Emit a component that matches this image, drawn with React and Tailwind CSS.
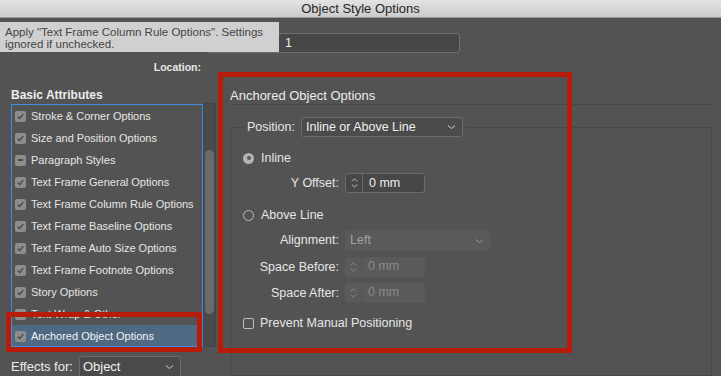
import React from 'react';

// Object Style Options dialog (InDesign) with red annotation boxes

const listItems = [
  { label: 'Stroke & Corner Options', state: 'on' },
  { label: 'Size and Position Options', state: 'on' },
  { label: 'Paragraph Styles', state: 'mixed' },
  { label: 'Text Frame General Options', state: 'on' },
  { label: 'Text Frame Column Rule Options', state: 'on' },
  { label: 'Text Frame Baseline Options', state: 'on' },
  { label: 'Text Frame Auto Size Options', state: 'on' },
  { label: 'Text Frame Footnote Options', state: 'on' },
  { label: 'Story Options', state: 'on' },
  { label: 'Text Wrap & Other', state: 'on' },
  { label: 'Anchored Object Options', state: 'on', selected: true },
];

const Chevron = ({ className = '' }) => (
  <svg className={className} width="9" height="6" viewBox="0 0 9 6" fill="none">
    <path d="M1 1.5l3.5 3 3.5-3" stroke="currentColor" strokeWidth="1" />
  </svg>
);

const ListCheck = ({ state }) => (
  <span className="w-[11px] h-[11px] rounded-[2px] bg-[#8d8d8d] flex items-center justify-center shrink-0">
    {state === 'mixed' ? (
      <span className="w-[5px] h-[2px] bg-[#4a4a4a]" />
    ) : (
      <svg width="9" height="9" viewBox="0 0 9 9" fill="none">
        <path d="M1.8 4.6l1.9 1.9 3.6-4.4" stroke="#4c4c4c" strokeWidth="1.5" />
      </svg>
    )}
  </span>
);

const Spinner = ({ value, disabled }) => (
  <div
    className={`flex w-[80px] h-[20px] rounded-[3px] ${
      disabled ? 'bg-[#5a5a5a] text-[#8a8a8a]' : 'bg-[#474747] border border-[#6c6c6c] text-[#ececec]'
    }`}
  >
    <div
      className={`w-[17px] flex flex-col items-center justify-center gap-[2px] border-r ${
        disabled ? 'border-[#535353] text-[#8a8a8a]' : 'border-[#6c6c6c] text-[#bdbdbd]'
      }`}
    >
      <svg width="7" height="4" viewBox="0 0 7 4" fill="none">
        <path d="M0.8 3.5l2.7-2.7 2.7 2.7" stroke="currentColor" strokeWidth="1" />
      </svg>
      <svg width="7" height="4" viewBox="0 0 7 4" fill="none">
        <path d="M0.8 0.5l2.7 2.7 2.7-2.7" stroke="currentColor" strokeWidth="1" />
      </svg>
    </div>
    <span className="pl-[6px] text-[12.5px] leading-[18px]">{value}</span>
  </div>
);

const FieldRow = ({ label, children, className = '' }) => (
  <div className={`flex items-center ${className}`}>
    <span className="w-[102px] text-right pr-[6px] text-[12.5px] text-[#e6e6e6]">{label}</span>
    {children}
  </div>
);

export default function App() {
  return (
    <div
      className="relative w-[721px] h-[376px] overflow-hidden bg-[#535353] text-[#e6e6e6] flex flex-col"
      style={{ fontFamily: '"Liberation Sans", Arial, sans-serif' }}
    >
      {/* Title bar */}
      <div className="h-[18px] shrink-0 bg-gradient-to-b from-[#e3e3e3] to-[#cbcbcb] border-b border-[#9c9c9c] flex items-center justify-center">
        <span className="text-[13px] text-[#262626] leading-none">Object Style Options</span>
      </div>

      {/* Style name field (left part hidden by tooltip) */}
      <div className="mt-[15px] flex items-center h-[20px]">
        <div className="w-[207px]" />
        <div className="w-[253px] h-[20px] bg-[#474747] border border-[#6f6f6f] rounded-[3px] pl-[77px] text-[12.5px] leading-[18px] text-[#f0f0f0]">
          1
        </div>
      </div>

      {/* Location */}
      <div className="mt-[7px] h-[16px] flex items-center">
        <span className="w-[201px] text-right text-[10.5px] font-bold text-[#e8e8e8]">Location:</span>
      </div>

      <div className="mt-[10px] flex flex-1 min-h-0">
        {/* Left column */}
        <div className="w-[216px] shrink-0 pl-[11px] flex flex-col">
          <div className="h-[18px] leading-[18px] text-[12px] font-bold text-[#ececec]">Basic Attributes</div>
          <div className="flex">
            <div className="w-[192px] h-[243px] border border-[#3d8ee0] overflow-hidden">
              {listItems.map((item) => (
                <div
                  key={item.label}
                  className={`h-[22px] flex items-center gap-[5px] pl-[3px] text-[11px] ${
                    item.selected ? 'bg-[#4f6983] text-[#f2f2f2]' : 'text-[#e6e6e6]'
                  }`}
                >
                  <ListCheck state={item.state} />
                  <span>{item.label}</span>
                </div>
              ))}
            </div>
            {/* Scrollbar */}
            <div className="w-[13px] h-[244px] -mt-px bg-[#4a4a4a] border border-[#444] flex justify-center pt-[46px]">
              <div className="w-[9px] h-[164px] rounded-full bg-[#6a6a6a]" />
            </div>
          </div>
          <div className="mt-[9px] flex items-center gap-[6px]">
            <span className="text-[13px] text-[#ececec]">Effects for:</span>
            <div className="w-[102px] h-[22px] border border-[#6c6c6c] rounded-[3px] bg-[#4a4a4a] flex items-center justify-between pl-[3px] pr-[6px]">
              <span className="text-[13px] text-[#f0f0f0]">Object</span>
              <Chevron className="text-[#cfcfcf]" />
            </div>
          </div>
        </div>

        {/* Right column */}
        <div className="flex-1 pl-[14px] pr-[9px] flex flex-col">
          <div className="h-[19px] leading-[20px] text-[13px] text-[#ececec] border-b border-[#474747]">
            Anchored Object Options
          </div>
          <fieldset className="mt-[12px] h-[280px] border border-[#474747] px-[12px]">
            <legend className="ml-[1px] px-[3px] flex items-center gap-[6px]">
              <span className="text-[12.5px] text-[#e6e6e6]">Position:</span>
              <div className="w-[162px] h-[20px] border border-[#6c6c6c] rounded-[3px] bg-[#4b4b4b] flex items-center justify-between pl-[4px] pr-[6px]">
                <span className="text-[12.5px] text-[#f0f0f0]">Inline or Above Line</span>
                <Chevron className="text-[#cfcfcf]" />
              </div>
            </legend>

            <div className="mt-[13px] h-[16px] flex items-center gap-[7px]">
              <span className="w-[11px] h-[11px] rounded-full bg-[#b4b4b4] flex items-center justify-center">
                <span className="w-[4px] h-[4px] rounded-full bg-[#5a5a5a]" />
              </span>
              <span className="text-[12.5px]">Inline</span>
            </div>

            <FieldRow label="Y Offset:" className="mt-[7px]">
              <Spinner value="0 mm" />
            </FieldRow>

            <div className="mt-[14px] h-[16px] flex items-center gap-[7px]">
              <span className="w-[11px] h-[11px] rounded-full border border-[#bdbdbd]" />
              <span className="text-[12.5px]">Above Line</span>
            </div>

            <FieldRow label="Alignment:" className="mt-[7px]">
              <div className="w-[145px] h-[21px] rounded-[3px] bg-[#5a5a5a] flex items-center justify-between pl-[5px] pr-[6px]">
                <span className="text-[12.5px] text-[#a3a3a3]">Left</span>
                <Chevron className="text-[#9a9a9a]" />
              </div>
            </FieldRow>

            <FieldRow label="Space Before:" className="mt-[6px]">
              <Spinner value="0 mm" disabled />
            </FieldRow>

            <FieldRow label="Space After:" className="mt-[6px]">
              <Spinner value="0 mm" disabled />
            </FieldRow>

            <div className="mt-[12px] h-[16px] flex items-center gap-[6px]">
              <span className="w-[11px] h-[11px] rounded-[2px] border border-[#bdbdbd]" />
              <span className="text-[12.5px]">Prevent Manual Positioning</span>
            </div>
          </fieldset>
        </div>
      </div>

      {/* Tooltip */}
      <div className="absolute left-0 top-[22px] w-[279px] h-[30px] bg-[#d0d0d0] pl-[5px] pt-[4px] text-[11.5px] leading-[12px] text-[#454545]">
        Apply "Text Frame Column Rule Options". Settings ignored if unchecked.
      </div>

      {/* Red annotation boxes */}
      <div className="absolute left-[218px] top-[72px] w-[354px] h-[281px] border-[5px] border-[#b71b09] pointer-events-none" />
      <div className="absolute left-[6px] top-[312px] w-[196px] h-[40px] border-[5px] border-[#b71b09] pointer-events-none" />
    </div>
  );
}
